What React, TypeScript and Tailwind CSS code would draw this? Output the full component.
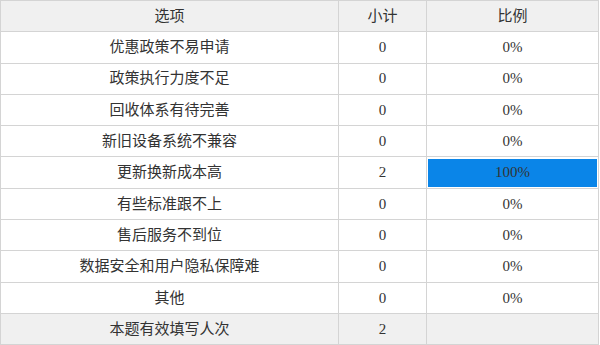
import React from 'react';

const ROWS = [
  { name: '优惠政策不易申请', count: 0, pct: 0 },
  { name: '政策执行力度不足', count: 0, pct: 0 },
  { name: '回收体系有待完善', count: 0, pct: 0 },
  { name: '新旧设备系统不兼容', count: 0, pct: 0 },
  { name: '更新换新成本高', count: 2, pct: 100 },
  { name: '有些标准跟不上', count: 0, pct: 0 },
  { name: '售后服务不到位', count: 0, pct: 0 },
  { name: '数据安全和用户隐私保障难', count: 0, pct: 0 },
  { name: '其他', count: 0, pct: 0 },
];

const cell = 'border border-[#d4d4d4] h-[31.3px] p-0 text-center align-middle';

export default function App() {
  return (
    <div
      className="w-[600px] h-[345px] bg-white overflow-hidden text-[15px] text-[#333]"
      style={{ fontFamily: '"Liberation Serif", "Noto Sans CJK SC", serif' }}
    >
      <table className="border-collapse w-[598px] table-fixed">
        <colgroup>
          <col className="w-[338px]" />
          <col className="w-[88px]" />
          <col className="w-[172px]" />
        </colgroup>
        <thead>
          <tr className="bg-[#f0f0f0]">
            <th className={`${cell} font-normal`}>选项</th>
            <th className={`${cell} font-normal`}>小计</th>
            <th className={`${cell} font-normal`}>比例</th>
          </tr>
        </thead>
        <tbody>
          {ROWS.map((r) => (
            <tr key={r.name}>
              <td className={cell}>{r.name}</td>
              <td className={cell}>{r.count}</td>
              <td className={cell}>
                {r.pct > 0 ? (
                  <div className="mx-[1px] h-[28px] bg-[#0a85e8] flex items-center justify-center">
                    {r.pct}%
                  </div>
                ) : (
                  `${r.pct}%`
                )}
              </td>
            </tr>
          ))}
          <tr className="bg-[#f0f0f0]">
            <td className={cell}>本题有效填写人次</td>
            <td className={cell}>2</td>
            <td className={cell}></td>
          </tr>
        </tbody>
      </table>
    </div>
  );
}
